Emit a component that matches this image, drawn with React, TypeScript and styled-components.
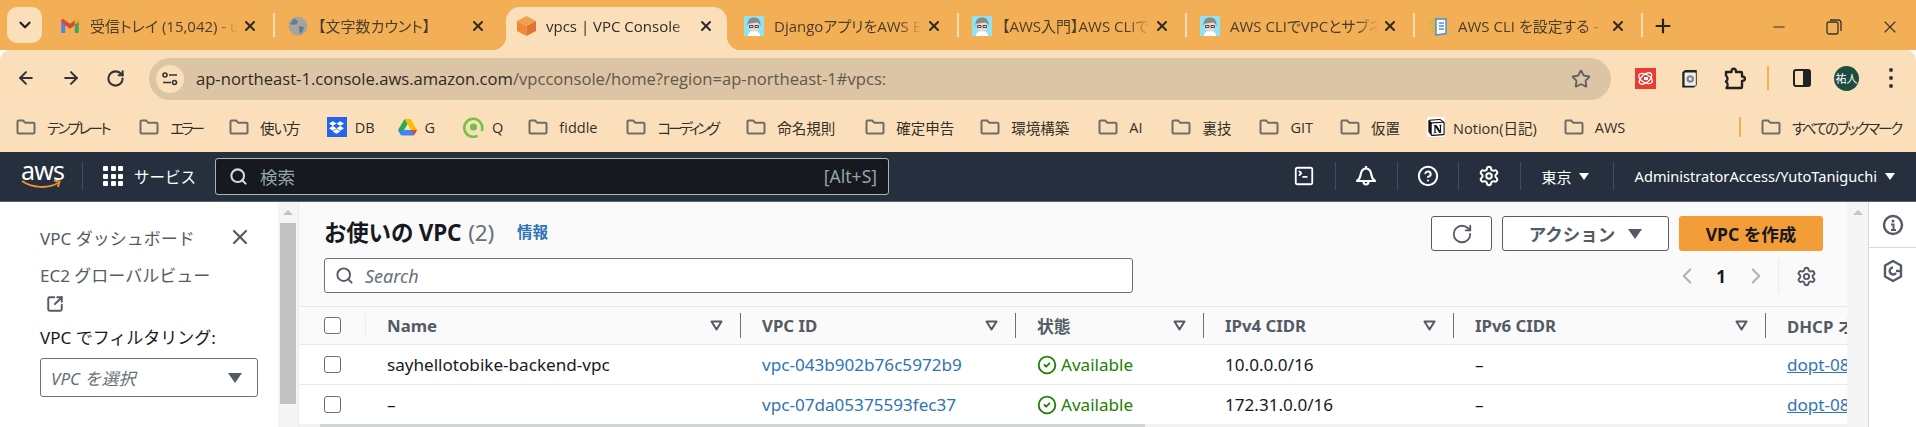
import React from 'react';
import styled, { createGlobalStyle } from 'styled-components';
import {
  ArrowLeft, ArrowRight, ChevronDown, ChevronLeft, ChevronRight, CircleCheck, CircleHelp,
  Minus, Plus, RotateCw, Search, Settings, SquareArrowOutUpRight, SquareTerminal, Star, X,
} from 'lucide-react';
import { FaDropbox } from 'react-icons/fa';
import { SiNotion } from 'react-icons/si';

const UI_FONT = `"Open Sans", "Noto Sans CJK JP", sans-serif`;
const AWS_FONT = `"Noto Sans", "Noto Sans CJK JP", sans-serif`;

const GlobalStyle = createGlobalStyle`
  html, body { margin: 0; padding: 0; background: #fff; overflow: hidden; }
  #root { width: 1916px; height: 427px; overflow: hidden; }
  * { box-sizing: border-box; }
`;

const Page = styled.div`
  display: flex;
  flex-direction: column;
  width: 1916px;
  height: 427px;
  overflow: hidden;
`;

/* ---- browser tabs ---- */
const TabStrip = styled.div`
  display: flex;
  align-items: flex-end;
  height: 50px;
  flex-shrink: 0;
  padding-left: 7px;
  background: #f3af56;
  font-family: ${UI_FONT};
  font-feature-settings: 'palt';
`;

const TabMenuButton = styled.div`
  display: flex;
  align-items: center;
  justify-content: center;
  width: 35px;
  height: 36px;
  margin: 0 8px 7px 0;
  border-radius: 10px;
  background: #fbdfba;
  color: #222;
`;

const Tab = styled.div<{ $active?: boolean; $divider?: boolean }>`
  position: relative;
  display: flex;
  align-items: center;
  width: 228px;
  height: 43px;
  flex-shrink: 0;
  padding: 0 20px 6px 10px;
  color: ${p => (p.$active ? '#2e2a25' : '#4a3d2a')};
  &::after {
    content: '';
    display: ${p => (p.$divider ? 'block' : 'none')};
    position: absolute;
    right: 3px;
    top: 6px;
    width: 2px;
    height: 24px;
    background: #fbdfba;
  }
`;

const ActiveTabFill = styled.span`
  position: absolute;
  left: 0;
  right: 7px;
  top: 0;
  bottom: 0;
  border-radius: 14px 14px 0 0;
  background: #fbdfba;
  &::before, &::after {
    content: '';
    position: absolute;
    bottom: 0;
    width: 14px;
    height: 14px;
  }
  &::before {
    left: -14px;
    background: radial-gradient(circle at 0 0, transparent 14px, #fbdfba 14.5px);
  }
  &::after {
    right: -14px;
    background: radial-gradient(circle at 100% 0, transparent 14px, #fbdfba 14.5px);
  }
`;

const TabIcon = styled.span`
  position: relative;
  display: flex;
  align-items: center;
  justify-content: center;
  width: 20px;
  height: 20px;
  flex-shrink: 0;
  margin-right: 10px;
`;

const TabTitle = styled.span`
  position: relative;
  flex: 1;
  min-width: 0;
  overflow: hidden;
  white-space: nowrap;
  font-size: 15px;
  -webkit-mask-image: linear-gradient(to right, #000 85%, transparent 100%);
  mask-image: linear-gradient(to right, #000 85%, transparent 100%);
`;

const TabClose = styled(X)`
  position: relative;
  flex-shrink: 0;
  margin-left: 4px;
  color: #2a2a2a;
`;

const NewTab = styled.div`
  display: flex;
  align-items: center;
  margin: 0 0 13px 6px;
  color: #222;
`;

const WindowControls = styled.div`
  display: flex;
  align-items: center;
  gap: 38px;
  margin: 0 16px 13px auto;
  color: #333;
`;

/* ---- address bar ---- */
const Toolbar = styled.div`
  display: flex;
  align-items: center;
  height: 57px;
  flex-shrink: 0;
  padding: 0 15px 0 16px;
  background: #fbdfba;
  border-radius: 10px 10px 0 0;
  border-bottom: 1px solid #f9e2c6;
  font-family: ${UI_FONT};
  color: #333;
`;

const NavButtons = styled.div`
  display: flex;
  align-items: center;
  gap: 25px;
  width: 133px;
`;

const AddressBar = styled.div`
  display: flex;
  align-items: center;
  width: 1462px;
  height: 42px;
  margin-top: 1px;
  padding: 0 20px 0 7px;
  border-radius: 21px;
  background: #dcc5a5;
`;

const SiteBadge = styled.span`
  display: flex;
  align-items: center;
  justify-content: center;
  width: 28px;
  height: 28px;
  margin-right: 12px;
  border-radius: 50%;
  background: #fbdfba;
`;

const UrlText = styled.span`
  flex: 1;
  font-size: 16.6px;
  white-space: nowrap;
  color: #615848;
  b { font-weight: 400; color: #2f2a23; }
`;

const ExtensionTray = styled.div`
  display: flex;
  align-items: center;
  margin-left: 24px;
`;

const ExtSlot = styled.span<{ $w: number; $left?: number }>`
  display: flex;
  align-items: center;
  justify-content: center;
  width: ${p => p.$w}px;
  margin-left: ${p => p.$left ?? 0}px;
`;

const TrayDivider = styled.span`
  width: 2px;
  height: 24px;
  margin: 0 24px 0 21px;
  background: #f3af56;
`;

const Avatar = styled.span`
  display: flex;
  align-items: center;
  justify-content: center;
  width: 25px;
  height: 25px;
  margin: 0 29px 0 23px;
  border-radius: 50%;
  background: #1d4d40;
  color: #fff;
  font-size: 11px;
`;

/* ---- bookmarks ---- */
const BookmarkBar = styled.div`
  display: flex;
  align-items: center;
  height: 44px;
  flex-shrink: 0;
  padding: 0 15px 4px 16px;
  background: #fbdfba;
  font-family: ${UI_FONT};
  font-size: 14.5px;
  font-feature-settings: 'palt';
  color: #33302a;
  white-space: nowrap;
`;

const Bookmark = styled.span<{ $gap: number; $track?: number; $logo?: boolean }>`
  display: flex;
  align-items: center;
  gap: ${p => (p.$logo ? 8 : 11)}px;
  margin-right: ${p => p.$gap}px;
  letter-spacing: ${p => p.$track ?? 0}px;
`;

const BookmarkDivider = styled.span`
  width: 2px;
  height: 20px;
  margin-left: auto;
  margin-right: 20px;
  background: #f3af56;
`;

const FolderIcon = () => (
  <svg width="20" height="16" viewBox="0 0 20 16" fill="none" stroke="#6f6d69" strokeWidth="2" strokeLinejoin="round">
    <path d="M1.5 2.5a1 1 0 0 1 1-1h4.600l2 2.200h8.400a1 1 0 0 1 1 1v8.800a1 1 0 0 1-1 1h-15a1 1 0 0 1-1-1z" />
  </svg>
);

/* ---- aws console nav ---- */
const ConsoleNav = styled.div`
  display: flex;
  align-items: center;
  height: 51px;
  flex-shrink: 0;
  padding: 0 0 1px 21px;
  background: #252f3e;
  border-top: 1px solid #fbdfba;
  border-bottom: 1px solid #596069;
  font-family: ${AWS_FONT};
  color: #fff;
`;

const AwsLogo = styled.span`
  position: relative;
  display: block;
  width: 40px;
  height: 36px;
  margin-right: 21px;
  font-size: 25px;
  line-height: 24px;
  letter-spacing: -0.8px;
  text-align: center;
  svg { position: absolute; left: 0; top: 21px; }
`;

const NavRule = styled.span`
  width: 1px;
  height: 28px;
  flex-shrink: 0;
  background: #414b5a;
`;

const ServicesMenu = styled.div`
  display: flex;
  align-items: center;
  gap: 11px;
  width: 132px;
  padding-left: 20px;
  font-size: 15.5px;
  white-space: nowrap;
`;

const GridDots = styled.span`
  display: grid;
  grid-template-columns: repeat(3, 5px);
  grid-auto-rows: 5px;
  gap: 2.5px;
  i { background: #fff; border-radius: 1px; }
`;

const GlobalSearch = styled.div`
  display: flex;
  align-items: center;
  width: 674px;
  height: 37px;
  padding: 0 11px 0 13px;
  border: 1px solid #aab7b8;
  border-radius: 3px;
  background: #16191f;
  font-size: 17.5px;
  color: #95a5a6;
  svg { color: #d5dbdb; margin-right: 12px; }
  span:last-child { margin-left: auto; }
`;

const NavIcons = styled.div`
  display: flex;
  align-items: center;
  margin-left: auto;
`;

const NavIconCell = styled.span`
  display: flex;
  align-items: center;
  justify-content: center;
  width: 61.5px;
  height: 28px;
  border-left: 1px solid #414b5a;
  &:first-child { border-left: 0; }
`;

const RegionMenu = styled.span`
  display: flex;
  align-items: center;
  gap: 7px;
  height: 28px;
  padding: 0 24px 0 21px;
  border-left: 1px solid #414b5a;
  font-size: 15px;
`;

const AccountMenu = styled.span`
  display: flex;
  align-items: center;
  gap: 8px;
  height: 28px;
  padding: 0 21px 0 21px;
  border-left: 1px solid #414b5a;
  font-size: 14.6px;
`;

const Caret = styled.span<{ $color?: string; $size?: number }>`
  display: inline-block;
  width: 0;
  height: 0;
  border-left: ${p => p.$size ?? 5}px solid transparent;
  border-right: ${p => p.$size ?? 5}px solid transparent;
  border-top: ${p => (p.$size ?? 5) * 1.5}px solid ${p => p.$color ?? '#fff'};
`;

/* ---- console body ---- */
const ConsoleBody = styled.div`
  display: flex;
  flex: 1;
  min-height: 0;
  font-family: ${AWS_FONT};
`;

const SideNav = styled.aside`
  display: flex;
  flex-direction: column;
  width: 278px;
  flex-shrink: 0;
  padding: 23px 20px 0 40px;
  background: #fff;
  font-size: 17px;
  color: #545b64;
`;

const SideRow = styled.div`
  display: flex;
  align-items: center;
  justify-content: space-between;
  height: 24px;
  padding-right: 6px;
  white-space: nowrap;
`;

const SideLink = styled.div`
  height: 24px;
  margin-top: 15px;
  line-height: 24px;
  white-space: nowrap;
`;

const SideExternal = styled.div`
  display: flex;
  margin: 7px 0 0 6px;
  height: 18px;
`;

const FilterLabel = styled.div`
  margin-top: 13px;
  line-height: 24px;
  color: #16191f;
  white-space: nowrap;
`;

const FilterSelect = styled.div`
  display: flex;
  align-items: center;
  justify-content: space-between;
  height: 39px;
  margin-top: 8px;
  padding: 0 15px 0 10px;
  border: 1px solid #687078;
  border-radius: 3px;
  font-style: italic;
  color: #687078;
`;

const Scrollbar = styled.div<{ $w: number }>`
  position: relative;
  width: ${p => p.$w}px;
  flex-shrink: 0;
  background: #f5f5f5;
`;

const ScrollArrow = styled.span`
  position: absolute;
  top: 8px;
  left: 50%;
  margin-left: -5px;
  width: 0;
  height: 0;
  border-left: 5px solid transparent;
  border-right: 5px solid transparent;
  border-bottom: 5px solid #c4c4c4;
`;

const ScrollThumb = styled.span`
  position: absolute;
  top: 21px;
  left: 2px;
  right: 2px;
  height: 181px;
  background: #c1c1c1;
`;

const Main = styled.main`
  display: flex;
  flex-direction: column;
  flex: 1;
  min-width: 0;
  overflow: hidden;
  background: #fafafa;
  border-left: 1px solid #eaeded;
`;

const PanelHeader = styled.div`
  display: flex;
  justify-content: space-between;
  height: 104px;
  flex-shrink: 0;
  padding: 14px 24px 0 25px;
`;

const HeaderLeft = styled.div`
  display: flex;
  flex-direction: column;
`;

const TitleRow = styled.div`
  display: flex;
  align-items: center;
  height: 35px;
  padding-bottom: 5px;
`;

const Title = styled.h1`
  margin: 0;
  font-size: 22.5px;
  font-weight: 700;
  color: #16191f;
  letter-spacing: -0.2px;
  white-space: nowrap;
  span { font-weight: 400; color: #687078; margin-left: 7px; }
`;

const InfoLink = styled.a`
  margin-left: 23px;
  font-size: 15.5px;
  font-weight: 700;
  color: #2f74b5;
`;

const SearchBox = styled.div`
  display: flex;
  align-items: center;
  width: 809px;
  height: 35px;
  margin-top: 7px;
  padding-left: 10px;
  border: 1px solid #687078;
  border-radius: 3px;
  background: #fff;
  font-size: 18px;
  font-style: italic;
  color: #687078;
  svg { margin-right: 11px; color: #545b64; }
`;

const HeaderRight = styled.div`
  display: flex;
  flex-direction: column;
  align-items: flex-end;
`;

const ButtonRow = styled.div`
  display: flex;
  gap: 10px;
`;

const OutlineButton = styled.div<{ $w: number }>`
  display: flex;
  align-items: center;
  justify-content: center;
  gap: 13px;
  width: ${p => p.$w}px;
  height: 35px;
  border: 1px solid #545b64;
  border-radius: 3px;
  background: #fff;
  font-size: 17.5px;
  font-weight: 700;
  color: #545b64;
`;

const PrimaryButton = styled.div`
  display: flex;
  align-items: center;
  justify-content: center;
  width: 144px;
  height: 35px;
  border-radius: 3px;
  background: #f29d38;
  font-size: 17.5px;
  font-weight: 700;
  color: #16191f;
`;

const Pager = styled.div`
  display: flex;
  align-items: center;
  height: 34px;
  margin-top: 8px;
  color: #aab7b8;
`;

const PageNumber = styled.span`
  margin: 0 17px 0 16px;
  font-size: 17px;
  font-weight: 700;
  color: #16191f;
`;

const PagerSettings = styled.span`
  display: flex;
  align-items: center;
  height: 34px;
  margin-left: 9px;
  padding: 0 6px 0 17px;
  border-left: 1px solid #eaeded;
  color: #545b64;
`;

const TableRow = styled.div<{ $head?: boolean }>`
  display: grid;
  grid-template-columns: 67px 375px 275px 188px 250px 312px 120px;
  align-items: center;
  width: 1587px;
  height: ${p => (p.$head ? 38 : 40)}px;
  flex-shrink: 0;
  border-top: 1px solid #e6e9e9;
  background: ${p => (p.$head ? '#fafafa' : '#fff')};
  font-size: ${p => (p.$head ? 16.8 : 17.1)}px;
  color: #16191f;
  white-space: nowrap;
`;

const CheckCell = styled.div<{ $head?: boolean }>`
  display: flex;
  align-items: center;
  height: 24px;
  padding-left: 25px;
  border-right: ${p => (p.$head ? '1px solid #eaeded' : '0')};
`;

const CheckBox = styled.span`
  display: block;
  width: 17px;
  height: 17px;
  border: 1px solid #687078;
  border-radius: 3px;
  background: #fff;
`;

const HeadCell = styled.div<{ $last?: boolean }>`
  display: flex;
  align-items: center;
  justify-content: space-between;
  height: 25px;
  padding: 0 17px 0 21px;
  border-right: ${p => (p.$last ? '0' : '1px solid #687078')};
  font-weight: 700;
  color: #545b64;
  overflow: hidden;
`;

const Cell = styled.div`
  padding-left: 21px;
  overflow: hidden;
`;

const VpcLink = styled.a<{ $underline?: boolean }>`
  color: #2f74b5;
  text-decoration: ${p => (p.$underline ? 'underline' : 'none')};
`;

const StatusCell = styled(Cell)`
  display: flex;
  align-items: center;
  gap: 4px;
  color: #1d8102;
`;

const TableFoot = styled.div`
  flex: 1;
  background: #f2f3f3;
  padding-left: 21px;
  i { display: block; width: 825px; height: 100%; background: #d1d5d5; }
`;

const RightRail = styled.div`
  display: flex;
  flex-direction: column;
  width: 48px;
  flex-shrink: 0;
  background: #fff;
  border-left: 1px solid #d5dbdb;
  color: #545b64;
`;

const RailButton = styled.div<{ $divider?: boolean }>`
  display: flex;
  align-items: center;
  justify-content: center;
  height: 46px;
  border-bottom: ${p => (p.$divider ? '1px solid #d5dbdb' : '0')};
`;

/* ---- drawn logos ---- */
const GmailLogo = () => (
  <svg width="18" height="14" viewBox="0 0 20 16">
    <path d="M0 3v11.5A1.5 1.5 0 0 0 1.5 16H4.5V6.5z" fill="#4a86e8" />
    <path d="M15.5 16h3a1.5 1.5 0 0 0 1.5-1.5V3l-4.500 3.500z" fill="#3aa757" />
    <path d="M0 3.500 4.500 7 10 11l5.500-4L20 3.500V2C20 .4 18.200-.5 16.900.5L10 5.500 3.100.5C1.800-.5 0 .4 0 2z" fill="#d9483b" />
    <path d="M15.500 6.500 20 3V2C20 .4 18.200-.5 16.900.5L15.500 1.600z" fill="#f0b429" />
  </svg>
);

const GlobeIcon = () => (
  <svg width="20" height="20" viewBox="0 0 20 20">
    <circle cx="10" cy="10" r="9.500" fill="#a5a59c" />
    <path d="M6 2.500 10 5l-1 3-4 1-3-1zM11 10l5 1-1 4-3 3-1-4z" fill="#5f7e9b" />
  </svg>
);

const CubeIcon = () => (
  <svg width="19" height="20" viewBox="0 0 19 20">
    <path d="M9.500 0 19 5 9.500 10 0 5z" fill="#f0a04b" />
    <path d="M0 5 9.500 10V20L0 15z" fill="#ee8a37" />
    <path d="M19 5 9.500 10V20L19 15z" fill="#dd7430" />
  </svg>
);

const AvatarIcon = () => (
  <svg width="20" height="20" viewBox="0 0 20 20">
    <rect width="20" height="20" fill="#8fe2f0" />
    <path d="M4 20c0-4 3-5 6-5s6 1 6 5z" fill="#fff" />
    <ellipse cx="10" cy="10" rx="5.500" ry="5.500" fill="#f0d6c3" />
    <path d="M3.500 10C3 4 6 1.500 10 1.500S17 4 16.500 10c-1-2.500-2-3.500-4-3.500S8 7.500 6 7.500 4 8 3.500 10z" fill="#8a8a86" />
    <path d="M5.500 9.500h3.500v2H5.500zM11 9.500h3.500v2H11z" fill="none" stroke="#3d4a6b" strokeWidth="1" />
  </svg>
);

const DocIcon = () => (
  <svg width="20" height="20" viewBox="0 0 20 20">
    <circle cx="8" cy="9" r="8" fill="#e0b252" />
    <path d="M8 3h10v14.500L8 19z" fill="#fff" stroke="#4a90d6" strokeWidth="1.500" />
    <path d="M11 7h5M11 10h5M11 13h5" stroke="#4a90d6" strokeWidth="1.500" />
  </svg>
);

const TuneIcon = () => (
  <svg width="16" height="14" viewBox="0 0 16 14" fill="none" stroke="#333" strokeWidth="1.600">
    <circle cx="3" cy="3" r="2" />
    <path d="M7 3h8M1 10.500h8" />
    <circle cx="12.500" cy="10.500" r="2" />
  </svg>
);

const RedExtension = () => (
  <svg width="21" height="21" viewBox="0 0 21 21">
    <rect width="21" height="21" fill="#ea3b32" />
    <g fill="none" stroke="#fff" strokeWidth="1.300">
      <ellipse cx="10.500" cy="10.500" rx="7.500" ry="4" transform="rotate(30 10.500 10.500)" />
      <ellipse cx="10.500" cy="10.500" rx="7.500" ry="4" transform="rotate(-40 10.500 10.500)" />
    </g>
    <rect x="9" y="9" width="4" height="3" fill="#fff" />
  </svg>
);

const SafeExtension = () => (
  <svg width="17" height="19" viewBox="0 0 18 21">
    <path d="M1 3.500 4 1h13v17l-3 2.500H1z" fill="#222" />
    <rect x="3.500" y="4" width="12.500" height="14.500" rx="1" fill="#f2efea" />
    <circle cx="9.800" cy="11" r="4.200" fill="#888" />
    <circle cx="9.800" cy="11" r="1.600" fill="#f2efea" />
  </svg>
);

const PuzzleIcon = () => (
  <svg width="22" height="24" viewBox="0 0 22 24" fill="none" stroke="#222" strokeWidth="2.400" strokeLinejoin="round">
    <path d="M2 6h5.500c0-4.500 4.500-4.500 4.500 0H17a1 1 0 0 1 1 1v3.500c4 0 4 4.500 0 4.500v6a1 1 0 0 1-1 1H2.500c1.500-2 1.500-5-.5-6.500 2-1.500 2-4 0-6z" />
  </svg>
);

const SidePanelIcon = () => (
  <svg width="18" height="18" viewBox="0 0 18 18">
    <rect x="1" y="1" width="16" height="16" rx="2" fill="none" stroke="#222" strokeWidth="2" />
    <path d="M10 1h5a2 2 0 0 1 2 2v12a2 2 0 0 1-2 2h-5z" fill="#222" />
  </svg>
);

const KebabIcon = () => (
  <svg width="6" height="22" viewBox="0 0 6 22" fill="#333">
    <circle cx="3" cy="3" r="2" />
    <circle cx="3" cy="11" r="2" />
    <circle cx="3" cy="19" r="2" />
  </svg>
);

const DriveIcon = () => (
  <svg width="19" height="17" viewBox="0 0 19 17">
    <path d="M6.500 0h6L6 11H0z" fill="#2da94f" />
    <path d="M6.500 0h6L19 11h-6z" fill="#fbbc04" />
    <path d="M3 16 6 11h13l-3 5a1.500 1.500 0 0 1-1 .5H4z" fill="#4285f4" />
    <path d="M16 16.500 19 11h-5.500z" fill="#ea4335" />
    <path d="M0 11h6l-3 5.500z" fill="#1a8fd8" />
  </svg>
);

const QIcon = () => (
  <svg width="21" height="21" viewBox="0 0 21 21" fill="none">
    <path d="M13.500 19.200A9 9 0 1 1 19 13" stroke="#6cc644" strokeWidth="2.600" strokeLinecap="round" />
    <circle cx="10.500" cy="10" r="3.600" fill="#6cc644" />
  </svg>
);

const NotionBadge = styled.span`
  display: flex;
  width: 18px;
  height: 20px;
  align-items: center;
  justify-content: center;
  background: #fff;
  border-radius: 2px;
  color: #111;
`;

const DropboxBadge = styled.span`
  display: flex;
  width: 20px;
  height: 20px;
  align-items: center;
  justify-content: center;
  background: #2563eb;
  color: #fff;
`;

const BellDrawn = () => (
  <svg width="22" height="22" viewBox="0 0 22 22" fill="none" stroke="#fff" strokeWidth="2.200" strokeLinejoin="round">
    <path d="M2 16c2-1.500 3-2.500 3.500-5.500C6 6 8 3.500 11 3.500s5 2.500 5.500 7c.5 3 1.500 4 3.500 5.500z" />
    <path d="M8.500 16.500c0 4 5 4 5 0M11 1v2.500" />
  </svg>
);

const HexIcon = () => (
  <svg width="20" height="24" viewBox="0 0 20 24" fill="none" stroke="#545b64" strokeWidth="2.400" strokeLinejoin="round">
    <path d="M10 2 18 6.500v11L10 22l-8-4.500v-11z" />
    <path d="M10 8.500a3.500 3.500 0 1 0 3 5.500" />
    <path d="M18 12h-5" />
  </svg>
);

const RailInfo = () => (
  <svg width="22" height="22" viewBox="0 0 22 22" fill="none">
    <circle cx="11" cy="11" r="9" stroke="#545b64" strokeWidth="2.400" />
    <circle cx="11" cy="7" r="1.500" fill="#545b64" />
    <path d="M9 10.500h2.500V16M9 16h5" stroke="#545b64" strokeWidth="2" />
  </svg>
);

const SortIcon = () => (
  <svg width="13" height="11" viewBox="0 0 13 11" fill="none" stroke="#545b64" strokeWidth="2" strokeLinejoin="round" style={{ flexShrink: 0 }}>
    <path d="M1.500 1.500h10L6.500 9.500z" />
  </svg>
);

const tabs = [
  { title: '受信トレイ (15,042) - u', icon: <GmailLogo />, divider: true },
  { title: '【文字数カウント】', icon: <GlobeIcon /> },
  { title: 'vpcs | VPC Console', icon: <CubeIcon />, active: true },
  { title: 'DjangoアプリをAWS EC2', icon: <AvatarIcon />, divider: true },
  { title: '【AWS入門】AWS CLIで', icon: <AvatarIcon />, divider: true },
  { title: 'AWS CLIでVPCとサブネ', icon: <AvatarIcon />, divider: true },
  { title: 'AWS CLI を設定する -', icon: <DocIcon />, divider: true },
];

const folder = <FolderIcon />;
const bookmarks = [
  { label: 'テンプレート', icon: folder, gap: 30, track: -2.5 },
  { label: 'エラー', icon: folder, gap: 27, track: -3 },
  { label: '使い方', icon: folder, gap: 27, track: -1 },
  { label: 'DB', icon: <DropboxBadge><FaDropbox size={15} /></DropboxBadge>, gap: 23, logo: true },
  { label: 'G', icon: <DriveIcon />, gap: 28, logo: true },
  { label: 'Q', icon: <QIcon />, gap: 25, logo: true },
  { label: 'fiddle', icon: folder, gap: 29 },
  { label: 'コーディング', icon: folder, gap: 29, track: -3 },
  { label: '命名規則', icon: folder, gap: 30 },
  { label: '確定申告', icon: folder, gap: 26 },
  { label: '環境構築', icon: folder, gap: 29 },
  { label: 'AI', icon: folder, gap: 29 },
  { label: '裏技', icon: folder, gap: 28 },
  { label: 'GIT', icon: folder, gap: 27 },
  { label: '仮置', icon: folder, gap: 27 },
  { label: 'Notion(日記)', icon: <NotionBadge><SiNotion size={17} /></NotionBadge>, gap: 27, logo: true },
  { label: 'AWS', icon: folder, gap: 0 },
];

const columns = ['Name', 'VPC ID', '状態', 'IPv4 CIDR', 'IPv6 CIDR', 'DHCP オプションセット'];

const vpcs = [
  { name: 'sayhellotobike-backend-vpc', id: 'vpc-043b902b76c5972b9', cidr: '10.0.0.0/16', dhcp: 'dopt-08f3c1a9d27e' },
  { name: '–', id: 'vpc-07da05375593fec37', cidr: '172.31.0.0/16', dhcp: 'dopt-08b6e4d0c15a' },
];

export default function App() {
  return (
    <Page>
      <GlobalStyle />
      <TabStrip>
        <TabMenuButton><ChevronDown size={18} strokeWidth={3} /></TabMenuButton>
        {tabs.map(t => (
          <Tab key={t.title} $active={t.active} $divider={t.divider}>
            {t.active && <ActiveTabFill />}
            <TabIcon>{t.icon}</TabIcon>
            <TabTitle>{t.title}</TabTitle>
            <TabClose size={16} strokeWidth={3} />
          </Tab>
        ))}
        <NewTab><Plus size={22} strokeWidth={2.4} /></NewTab>
        <WindowControls>
          <Minus size={18} strokeWidth={1.4} />
          <svg width="16" height="16" viewBox="0 0 16 16" fill="none" stroke="#333" strokeWidth="1.300">
            <rect x="1" y="3" width="11" height="12" rx="2" />
            <path d="M4 1h8a3 3 0 0 1 3 3v8" />
          </svg>
          <X size={20} strokeWidth={1.3} />
        </WindowControls>
      </TabStrip>

      <Toolbar>
        <NavButtons>
          <ArrowLeft size={20} strokeWidth={2.4} />
          <ArrowRight size={20} strokeWidth={2.4} />
          <RotateCw size={19} strokeWidth={2.6} />
        </NavButtons>
        <AddressBar>
          <SiteBadge><TuneIcon /></SiteBadge>
          <UrlText><b>ap-northeast-1.console.aws.amazon.com</b>/vpcconsole/home?region=ap-northeast-1#vpcs:</UrlText>
          <Star size={20} strokeWidth={2.2} color="#5f5f5f" />
        </AddressBar>
        <ExtensionTray>
          <ExtSlot $w={21}><RedExtension /></ExtSlot>
          <ExtSlot $w={21} $left={23}><SafeExtension /></ExtSlot>
          <ExtSlot $w={22} $left={24}><PuzzleIcon /></ExtSlot>
          <TrayDivider />
          <ExtSlot $w={18}><SidePanelIcon /></ExtSlot>
          <Avatar>祐人</Avatar>
          <ExtSlot $w={6}><KebabIcon /></ExtSlot>
        </ExtensionTray>
      </Toolbar>

      <BookmarkBar>
        {bookmarks.map(b => (
          <Bookmark key={b.label} $gap={b.gap} $track={b.track} $logo={b.logo}>
            {b.icon}
            <span>{b.label}</span>
          </Bookmark>
        ))}
        <BookmarkDivider />
        <Bookmark $gap={0} $track={-2.2}>
          {folder}
          <span>すべてのブックマーク</span>
        </Bookmark>
      </BookmarkBar>

      <ConsoleNav>
        <AwsLogo>
          aws
          <svg width="40" height="12" viewBox="0 0 40 12" fill="none" stroke="#ec912d" strokeWidth="2">
            <path d="M1 2c10 7 26 8 36 2" />
            <path d="M33 1.500 38.500 2.500 37 8" />
          </svg>
        </AwsLogo>
        <NavRule />
        <ServicesMenu>
          <GridDots>{Array.from({ length: 9 }, (_, i) => <i key={i} />)}</GridDots>
          サービス
        </ServicesMenu>
        <GlobalSearch>
          <Search size={19} strokeWidth={2.6} />
          <span>検索</span>
          <span>[Alt+S]</span>
        </GlobalSearch>
        <NavIcons>
          <NavIconCell><SquareTerminal size={22} strokeWidth={2} /></NavIconCell>
          <NavIconCell><BellDrawn /></NavIconCell>
          <NavIconCell><CircleHelp size={22} strokeWidth={2.2} /></NavIconCell>
          <NavIconCell><Settings size={22} strokeWidth={2.2} /></NavIconCell>
          <RegionMenu>東京 <Caret /></RegionMenu>
          <AccountMenu>AdministratorAccess/YutoTaniguchi <Caret /></AccountMenu>
        </NavIcons>
      </ConsoleNav>

      <ConsoleBody>
        <SideNav>
          <SideRow>
            VPC ダッシュボード
            <X size={24} strokeWidth={2.2} />
          </SideRow>
          <SideLink>EC2 グローバルビュー</SideLink>
          <SideExternal><SquareArrowOutUpRight size={18} strokeWidth={2.6} /></SideExternal>
          <FilterLabel>VPC でフィルタリング:</FilterLabel>
          <FilterSelect>
            VPC を選択
            <Caret $color="#545b64" $size={7} />
          </FilterSelect>
        </SideNav>
        <Scrollbar $w={20}>
          <ScrollArrow />
          <ScrollThumb />
        </Scrollbar>
        <Main>
          <PanelHeader>
            <HeaderLeft>
              <TitleRow>
                <Title>お使いの VPC<span>(2)</span></Title>
                <InfoLink>情報</InfoLink>
              </TitleRow>
              <SearchBox><Search size={19} strokeWidth={2.4} />Search</SearchBox>
            </HeaderLeft>
            <HeaderRight>
              <ButtonRow>
                <OutlineButton $w={61}><RotateCw size={22} strokeWidth={2} /></OutlineButton>
                <OutlineButton $w={167}>アクション <Caret $color="#545b64" $size={7} /></OutlineButton>
                <PrimaryButton>VPC を作成</PrimaryButton>
              </ButtonRow>
              <Pager>
                <ChevronLeft size={26} strokeWidth={2} />
                <PageNumber>1</PageNumber>
                <ChevronRight size={26} strokeWidth={2} />
                <PagerSettings><Settings size={21} strokeWidth={2.2} /></PagerSettings>
              </Pager>
            </HeaderRight>
          </PanelHeader>
          <TableRow $head>
            <CheckCell $head><CheckBox /></CheckCell>
            {columns.map((c, i) => (
              <HeadCell key={c} $last={i === columns.length - 1}>
                {c}
                {i < columns.length - 1 && <SortIcon />}
              </HeadCell>
            ))}
          </TableRow>
          {vpcs.map(v => (
            <TableRow key={v.id}>
              <CheckCell><CheckBox /></CheckCell>
              <Cell>{v.name}</Cell>
              <Cell><VpcLink>{v.id}</VpcLink></Cell>
              <StatusCell><CircleCheck size={20} strokeWidth={2.2} />Available</StatusCell>
              <Cell>{v.cidr}</Cell>
              <Cell>–</Cell>
              <Cell><VpcLink $underline>{v.dhcp}</VpcLink></Cell>
            </TableRow>
          ))}
          <TableFoot><i /></TableFoot>
        </Main>
        <Scrollbar $w={21}>
          <ScrollArrow />
        </Scrollbar>
        <RightRail>
          <RailButton $divider><RailInfo /></RailButton>
          <RailButton><HexIcon /></RailButton>
        </RightRail>
      </ConsoleBody>
    </Page>
  );
}
